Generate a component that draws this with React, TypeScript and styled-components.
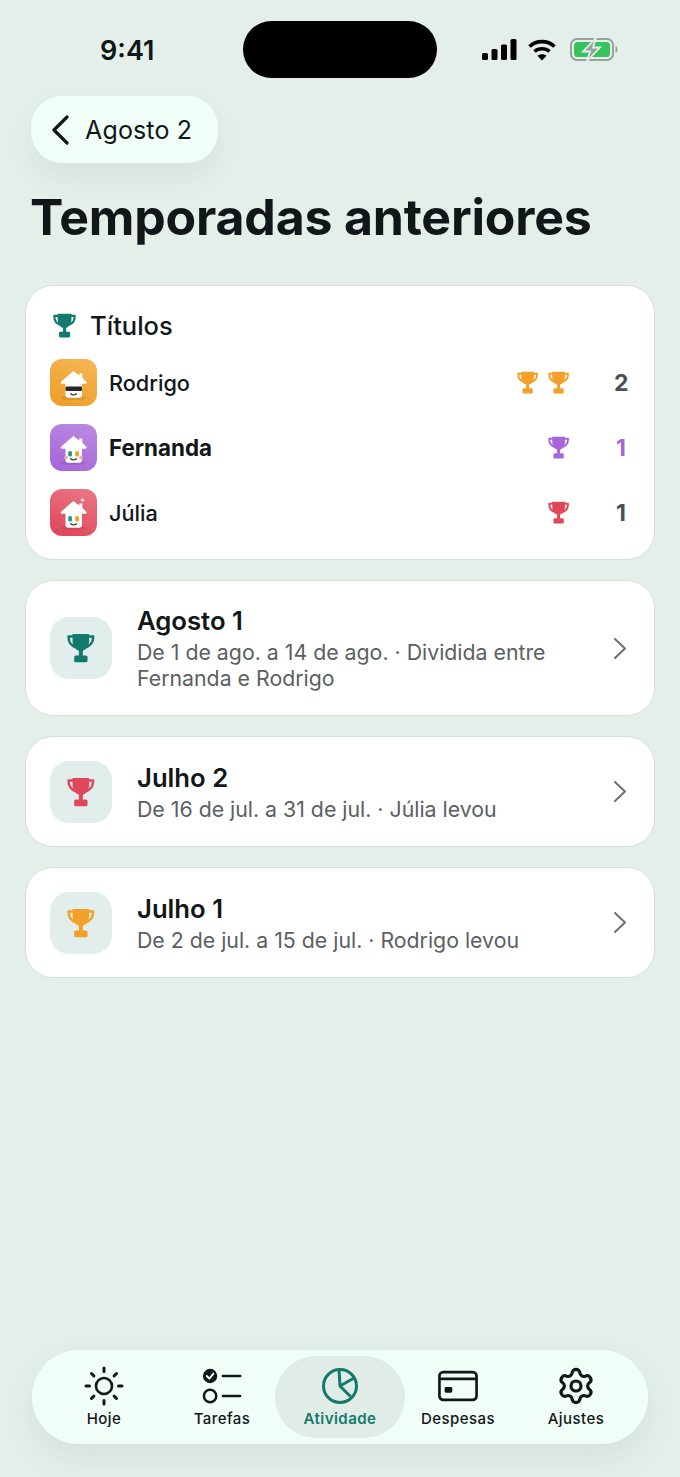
import styled, { createGlobalStyle } from 'styled-components';
import { Settings } from 'lucide-react';

const teal = '#12796e';
const orange = '#f2a027';
const purple = '#a765d9';
const red = '#e0475b';
const ink = '#111719';

const GlobalStyle = createGlobalStyle`
  html, body {
    margin: 0;
    padding: 0;
    background: #e5efea;
  }
  body {
    font-family: Inter, "Liberation Sans", sans-serif;
    color: ${ink};
  }
`;

const Page = styled.div`
  width: 680px;
  height: 1477px;
  display: flex;
  flex-direction: column;
  overflow: hidden;
`;

const StatusBar = styled.div`
  display: grid;
  grid-template-columns: 243px 194px 1fr;
  grid-template-rows: 57px;
  padding-top: 21px;
  height: 57px;
`;

const Time = styled.div`
  font-size: 27px;
  font-weight: 600;
  line-height: 59px;
  padding-left: 100px;
`;

const Island = styled.div`
  background: #000;
  border-radius: 29px;
`;

const StatusIcons = styled.div`
  display: flex;
  align-items: center;
  gap: 11px;
  padding-left: 45px;
`;

const BackButton = styled.div`
  align-self: flex-start;
  margin: 18px 0 0 31px;
  height: 67px;
  width: 187px;
  box-sizing: border-box;
  display: flex;
  align-items: center;
  gap: 16px;
  padding-left: 21px;
  background: #f1fdf7;
  border-radius: 31px;
  box-shadow: 0 14px 30px rgba(40, 70, 60, 0.07);
  font-size: 25px;
  letter-spacing: 0.15px;
  color: ${ink};
`;

const Title = styled.h1`
  margin: 22px 0 0 30px;
  font-size: 50px;
  line-height: 64px;
  font-weight: 700;
  color: ${ink};
  letter-spacing: -0.2px;
`;

const Content = styled.div`
  margin: 36px 25px 0;
  display: flex;
  flex-direction: column;
  gap: 20px;
`;

const Card = styled.div`
  background: #fff;
  border: 1px solid #d5e0db;
  border-radius: 28px;
`;

const TitlesCard = styled(Card)`
  padding: 25px 26px 23px 24px;
  display: flex;
  flex-direction: column;
  gap: 18px;
`;

const TitlesHeading = styled.div`
  display: flex;
  align-items: center;
  gap: 14px;
  height: 30px;
  box-sizing: border-box;
  padding: 0 0 2px 3px;
  font-size: 25.5px;
  font-weight: 500;
`;

const PlayerRow = styled.div`
  display: flex;
  align-items: center;
  height: 47px;
`;

const PlayerName = styled.div<{ $bold?: boolean }>`
  margin-left: 12px;
  font-size: ${(p) => (p.$bold ? '22.4px' : '21.7px')};
  font-weight: ${(p) => (p.$bold ? 700 : 500)};
  flex: 1;
`;

const Cups = styled.div`
  display: flex;
  gap: 10px;
`;

const Count = styled.div<{ $color: string }>`
  width: 14px;
  margin-left: 45px;
  text-align: center;
  font-size: 23px;
  font-weight: 700;
  color: ${(p) => p.$color};
`;

const SeasonCard = styled(Card)`
  min-height: 111px;
  box-sizing: border-box;
  padding: 0 27px 0 24px;
  display: flex;
  align-items: center;
`;

const SeasonIcon = styled.div`
  width: 62px;
  height: 62px;
  flex: none;
  border-radius: 19px;
  background: #e2eeeb;
  display: flex;
  align-items: center;
  justify-content: center;
`;

const SeasonText = styled.div`
  margin-left: 25px;
  padding: 25px 0 24px;
  flex: 1;
`;

const SeasonTitle = styled.div`
  font-size: 25.7px;
  line-height: 30px;
  font-weight: 600;
  color: ${ink};
`;

const SeasonSub = styled.div`
  margin-top: 3px;
  width: 430px;
  font-size: 21.3px;
  line-height: 26px;
  color: #5a5f62;
`;

const TabBar = styled.div`
  margin: auto 32px 33px;
  height: 94px;
  box-sizing: border-box;
  padding: 6px 13px;
  display: grid;
  grid-template-columns: repeat(5, 118px);
  background: #f1fdf7;
  border-radius: 47px;
  box-shadow: 0 14px 34px rgba(40, 70, 60, 0.08);
`;

const Tab = styled.div<{ $active?: boolean }>`
  display: flex;
  flex-direction: column;
  align-items: center;
  padding-top: 10px;
  margin: 0 ${(p) => (p.$active ? '-6px' : '0')};
  border-radius: 41px;
  background: ${(p) => (p.$active ? '#e2ece7' : 'transparent')};
  color: ${(p) => (p.$active ? teal : ink)};
  font-size: 15px;
  font-weight: ${(p) => (p.$active ? 600 : 500)};
  letter-spacing: 0.45px;
`;

const TabIcon = styled.div`
  width: 40px;
  height: 40px;
  display: flex;
  align-items: center;
  justify-content: center;
`;

const TabLabel = styled.div`
  margin-top: 3px;
  line-height: 20px;
`;

// height is what varies, the cup is a bit taller than wide
function Trophy({ color, height = 23 }: { color: string; height?: number }) {
  return (
    <svg width={(height * 24) / 26} height={height} viewBox="0 0 24 26" style={{ flex: 'none' }}>
      <path
        d="M6 3H1.500c-.4 4.500 1.800 8 6.500 9.500M18 3h4.500c.4 4.500-1.800 8-6.500 9.500"
        fill="none"
        stroke={color}
        strokeWidth="2.200"
      />
      <path d="M4.800 0.800h14.400v6.200c0 4.600-2.800 7.500-5.500 8.400V20h-3.400v-4.600C7.600 14.500 4.800 11.600 4.800 7z" fill={color} />
      <rect x="6.200" y="19.600" width="11.600" height="5.800" rx="1.400" fill={color} />
    </svg>
  );
}

function Chevron({ dir, color, w, h, stroke }: { dir: 'left' | 'right'; color: string; w: number; h: number; stroke: number }) {
  const d = dir === 'left' ? `M${w - 2} 2 2 ${h / 2} ${w - 2} ${h - 2}` : `M2 2 ${w - 2} ${h / 2} 2 ${h - 2}`;
  return (
    <svg width={w} height={h} viewBox={`0 0 ${w} ${h}`} fill="none" stroke={color} strokeWidth={stroke} strokeLinecap="round" strokeLinejoin="round" style={{ flex: 'none' }}>
      <path d={d} />
    </svg>
  );
}

function Avatar({ from, to, variant }: { from: string; to: string; variant: 'shades' | 'blush' | 'spark' }) {
  const id = `av-${variant}`;
  return (
    <svg width="47" height="47" viewBox="0 0 47 47" style={{ flex: 'none' }}>
      <defs>
        <linearGradient id={id} x1="0.7" y1="0" x2="0.3" y2="1">
          <stop offset="0" stopColor={from} />
          <stop offset="1" stopColor={to} />
        </linearGradient>
      </defs>
      <rect width="47" height="47" rx="12" fill={`url(#${id})`} />
      <ellipse cx="23.500" cy="39" rx="13" ry="2" fill="#000" opacity="0.08" />
      <path
        d="M23.300 12 29.300 16.500V14.500h3v4.300l4 4c.7.800.3 2-.7 2h-3.600V36c0 1.600-1 2.700-2.600 2.700H18.100c-1.600 0-2.600-1.100-2.600-2.700V24.800h-3.700c-1 0-1.400-1.200-.7-2z"
        fill="#fff"
      />
      {variant === 'shades' ? (
        <rect x="15.500" y="27.500" width="16.500" height="4.500" rx="1.200" fill="#23282a" />
      ) : (
        <>
          <rect x="18.200" y="27" width="3.800" height="5.600" rx="1.600" fill="#1f9c8e" />
          <rect x="25.200" y="27" width="3.800" height="5.600" rx="1.600" fill="#f2a027" />
        </>
      )}
      {variant === 'blush' && (
        <>
          <circle cx="16" cy="33.500" r="1.800" fill="#f7a8a0" />
          <circle cx="31" cy="33.500" r="1.800" fill="#f7a8a0" />
        </>
      )}
      <path d="M20.500 34.800q3 2.400 6 0" fill="none" stroke="#23282a" strokeWidth="1.100" strokeLinecap="round" />
      {variant === 'spark' && (
        <path d="M32.500 8l.8 2.200 2.200.8-2.200.8-.8 2.200-.8-2.200-2.200-.8 2.200-.8z" fill="#ffd9dd" />
      )}
    </svg>
  );
}

const players = [
  { name: 'Rodrigo', from: '#f6b451', to: '#ee9f2b', variant: 'shades' as const, cups: 2, cupColor: orange, countColor: '#4a4f52' },
  { name: 'Fernanda', from: '#b988e2', to: '#a866d8', variant: 'blush' as const, cups: 1, cupColor: purple, countColor: purple, bold: true },
  { name: 'Júlia', from: '#ea7483', to: '#e0475b', variant: 'spark' as const, cups: 1, cupColor: red, countColor: '#4a4f52' },
];

const seasons = [
  { title: 'Agosto 1', sub: 'De 1 de ago. a 14 de ago. · Dividida entre Fernanda e Rodrigo', color: teal },
  { title: 'Julho 2', sub: 'De 16 de jul. a 31 de jul. · Júlia levou', color: red },
  { title: 'Julho 1', sub: 'De 2 de jul. a 15 de jul. · Rodrigo levou', color: orange },
];

function SunIcon() {
  return (
    <svg width="40" height="40" viewBox="0 0 40 40" fill="none" stroke={ink} strokeLinecap="round">
      <circle cx="20" cy="20" r="8" strokeWidth="2.600" />
      <g strokeWidth="3">
        <path d="M20 2v3.500M20 34.500V38M2 20h3.500M34.500 20H38M7.500 7.500l2.400 2.400M30.100 30.100l2.400 2.400M7.500 32.500l2.400-2.400M30.100 9.900l2.400-2.400" />
      </g>
    </svg>
  );
}

function TasksIcon() {
  return (
    <svg width="42" height="40" viewBox="0 0 42 40" fill="none">
      <circle cx="8.500" cy="9.500" r="7.500" fill={ink} />
      <path d="M5 9.500l2.700 2.800L12 7" stroke="#fff" strokeWidth="2" strokeLinecap="round" strokeLinejoin="round" />
      <circle cx="8.500" cy="30.500" r="6.500" stroke={ink} strokeWidth="2.600" />
      <path d="M22 9.500h18M22 30.500h18" stroke={ink} strokeWidth="2.800" strokeLinecap="round" />
    </svg>
  );
}

function ActivityIcon() {
  return (
    <svg width="38" height="38" viewBox="0 0 38 38" fill="none" stroke={teal} strokeWidth="3" strokeLinejoin="round">
      <circle cx="19" cy="19" r="16.500" />
      <path d="M18 2.500 19 19l14-8M19 19l10.500 10.500" />
    </svg>
  );
}

function CardIcon() {
  return (
    <svg width="42" height="32" viewBox="0 0 42 32" fill="none">
      <rect x="1.500" y="1.500" width="39" height="29" rx="4" stroke={ink} strokeWidth="2.800" />
      <path d="M1.500 8.500h39" stroke={ink} strokeWidth="3" />
      <rect x="7" y="17" width="8" height="6" rx="1.500" fill={ink} />
    </svg>
  );
}

function StatusGlyphs() {
  return (
    <>
      <svg width="35" height="21" viewBox="0 0 35 21" fill="#000">
        <rect x="0" y="14" width="6" height="7" rx="1.500" />
        <rect x="9.500" y="10" width="6" height="11" rx="1.500" />
        <rect x="19" y="5.500" width="6" height="15.500" rx="1.500" />
        <rect x="28.500" y="0" width="6" height="21" rx="1.500" />
      </svg>
      <svg width="28" height="22" viewBox="0 0 28 22" fill="none" stroke="#000" strokeWidth="3.600">
        <path d="M1.500 7.500C8.500 1 19.500 1 26.500 7.500" />
        <path d="M6.500 12.500c4.200-3.700 10.800-3.700 15 0" />
        <path d="M14 21.500l-4.500-4.700c2.500-2 6.500-2 9 0z" fill="#000" stroke="none" />
      </svg>
      <svg width="48" height="23" viewBox="0 0 48 23" fill="none" style={{ marginLeft: 3 }}>
        <rect x="1" y="1" width="42" height="21" rx="6" stroke="#9aa09d" strokeWidth="2" />
        <path d="M45.500 8c1.500.5 2 2 2 3.500s-.5 3-2 3.500z" fill="#9aa09d" />
        <rect x="4" y="4" width="36" height="15" rx="3.500" fill="#35c25f" />
        <path d="M26 0 13 13.500h7L17 23l13-13.500h-7z" fill="#9aa09d" stroke="#e5efea" strokeWidth="1.800" />
      </svg>
    </>
  );
}

export default function App() {
  return (
    <Page>
      <GlobalStyle />
      <StatusBar>
        <Time>9:41</Time>
        <Island />
        <StatusIcons>
          <StatusGlyphs />
        </StatusIcons>
      </StatusBar>
      <BackButton>
        <Chevron dir="left" color={ink} w={17} h={30} stroke={3.2} />
        Agosto 2
      </BackButton>
      <Title>Temporadas anteriores</Title>
      <Content>
        <TitlesCard>
          <TitlesHeading>
            <Trophy color={teal} height={25} />
            Títulos
          </TitlesHeading>
          {players.map((p) => (
            <PlayerRow key={p.name}>
              <Avatar from={p.from} to={p.to} variant={p.variant} />
              <PlayerName $bold={p.bold}>{p.name}</PlayerName>
              <Cups>
                {Array.from({ length: p.cups }).map((_, i) => (
                  <Trophy key={i} color={p.cupColor} />
                ))}
              </Cups>
              <Count $color={p.countColor}>{p.cups}</Count>
            </PlayerRow>
          ))}
        </TitlesCard>
        {seasons.map((s) => (
          <SeasonCard key={s.title}>
            <SeasonIcon>
              <Trophy color={s.color} height={30} />
            </SeasonIcon>
            <SeasonText>
              <SeasonTitle>{s.title}</SeasonTitle>
              <SeasonSub>{s.sub}</SeasonSub>
            </SeasonText>
            <Chevron dir="right" color="#6b7073" w={14} h={23} stroke={2} />
          </SeasonCard>
        ))}
      </Content>
      <TabBar>
        <Tab>
          <TabIcon><SunIcon /></TabIcon>
          <TabLabel>Hoje</TabLabel>
        </Tab>
        <Tab>
          <TabIcon><TasksIcon /></TabIcon>
          <TabLabel>Tarefas</TabLabel>
        </Tab>
        <Tab $active>
          <TabIcon><ActivityIcon /></TabIcon>
          <TabLabel>Atividade</TabLabel>
        </Tab>
        <Tab>
          <TabIcon><CardIcon /></TabIcon>
          <TabLabel>Despesas</TabLabel>
        </Tab>
        <Tab>
          <TabIcon><Settings size={40} strokeWidth={1.900} color={ink} /></TabIcon>
          <TabLabel>Ajustes</TabLabel>
        </Tab>
      </TabBar>
    </Page>
  );
}
